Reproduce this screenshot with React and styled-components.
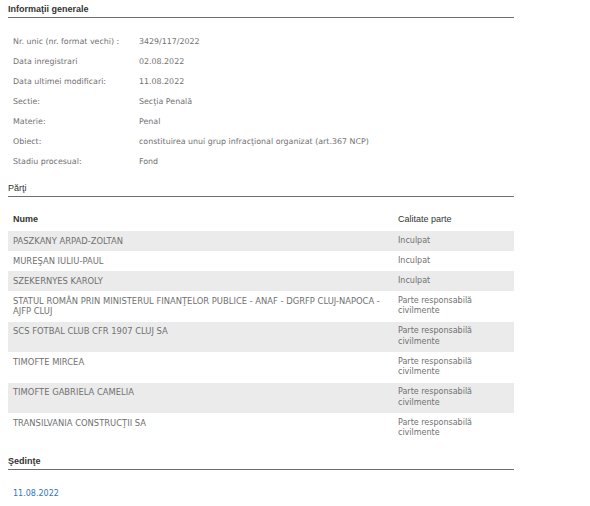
import styled, { createGlobalStyle } from "styled-components";

const GlobalStyle = createGlobalStyle`
  html, body {
    margin: 0;
    padding: 0;
    background: #ffffff;
  }
  body {
    font-family: "DejaVu Sans", Verdana, sans-serif;
  }
`;

const Page = styled.div`
  width: 506px;
  padding: 0 8px;
`;

const Heading = styled.h2`
  margin: ${(p) => p.$top || 0}px 0 0;
  padding: 4px 0 2px;
  font-family: "Liberation Sans", Arial, sans-serif;
  font-size: 9px;
  line-height: 11px;
  font-weight: ${(p) => (p.$bold ? 700 : 400)};
  color: #333333;
  border-bottom: 1px solid #6f6f6f;
`;

const InfoGrid = styled.div`
  margin-top: 14px;
  display: grid;
  grid-template-columns: 126px 1fr;
  padding-left: 5px;
  font-size: 7.9px;
  color: #707070;
`;

const InfoCell = styled.div`
  height: 20px;
  line-height: 20px;
  white-space: nowrap;
`;

const Table = styled.div`
  margin-top: 12px;
  font-size: 8px;
  color: #707070;
`;

const Row = styled.div`
  display: grid;
  grid-template-columns: 385px 120px;
  background: ${(p) => (p.$striped ? "#ebebeb" : "transparent")};
`;

const Cell = styled.div`
  padding: 4.75px 5px;
  line-height: 10.5px;
  font-size: ${(p) => (p.$caps ? "8.4px" : "8px")};
`;

const HeadCell = styled.div`
  padding: 5px 5px 7px;
  line-height: 10px;
  font-family: "Liberation Sans", Arial, sans-serif;
  font-size: 9px;
  font-weight: ${(p) => (p.$bold ? 700 : 400)};
  color: #333333;
`;

const Hearings = styled.div`
  margin-top: 14px;
  padding: 4.75px 5px;
  line-height: 10.5px;
  font-size: 8px;
`;

const DateLink = styled.a`
  color: #2f74bf;
  text-decoration: none;
`;

const info = [
  ["Nr. unic (nr. format vechi) :", "3429/117/2022"],
  ["Data inregistrari", "02.08.2022"],
  ["Data ultimei modificari:", "11.08.2022"],
  ["Sectie:", "Secţia Penală"],
  ["Materie:", "Penal"],
  ["Obiect:", "constituirea unui grup infracţional organizat (art.367 NCP)"],
  ["Stadiu procesual:", "Fond"],
];

const parties = [
  ["PASZKANY ARPAD-ZOLTAN", "Inculpat"],
  ["MUREŞAN IULIU-PAUL", "Inculpat"],
  ["SZEKERNYES KAROLY", "Inculpat"],
  [
    "STATUL ROMÂN PRIN MINISTERUL FINANŢELOR PUBLICE - ANAF - DGRFP CLUJ-NAPOCA - AJFP CLUJ",
    "Parte responsabilă civilmente",
  ],
  ["SCS FOTBAL CLUB CFR 1907 CLUJ SA", "Parte responsabilă civilmente"],
  ["TIMOFTE MIRCEA", "Parte responsabilă civilmente"],
  ["TIMOFTE GABRIELA CAMELIA", "Parte responsabilă civilmente"],
  ["TRANSILVANIA CONSTRUCŢII SA", "Parte responsabilă civilmente"],
];

export default function App() {
  return (
    <>
      <GlobalStyle />
      <Page>
        <Heading $bold>Informaţii generale</Heading>
        <InfoGrid>
          {info.map(([label, value]) => [
            <InfoCell key={label}>{label}</InfoCell>,
            <InfoCell key={label + "-v"}>{value}</InfoCell>,
          ])}
        </InfoGrid>

        <Heading $top={7}>Părţi</Heading>
        <Table>
          <Row>
            <HeadCell $bold>Nume</HeadCell>
            <HeadCell>Calitate parte</HeadCell>
          </Row>
          {parties.map(([name, role], i) => (
            <Row key={name} $striped={i % 2 === 0}>
              <Cell $caps>{name}</Cell>
              <Cell>{role}</Cell>
            </Row>
          ))}
        </Table>

        <Heading $bold $top={8.5}>Şedinţe</Heading>
        <Hearings>
          <DateLink href="#">11.08.2022</DateLink>
        </Hearings>
      </Page>
    </>
  );
}
